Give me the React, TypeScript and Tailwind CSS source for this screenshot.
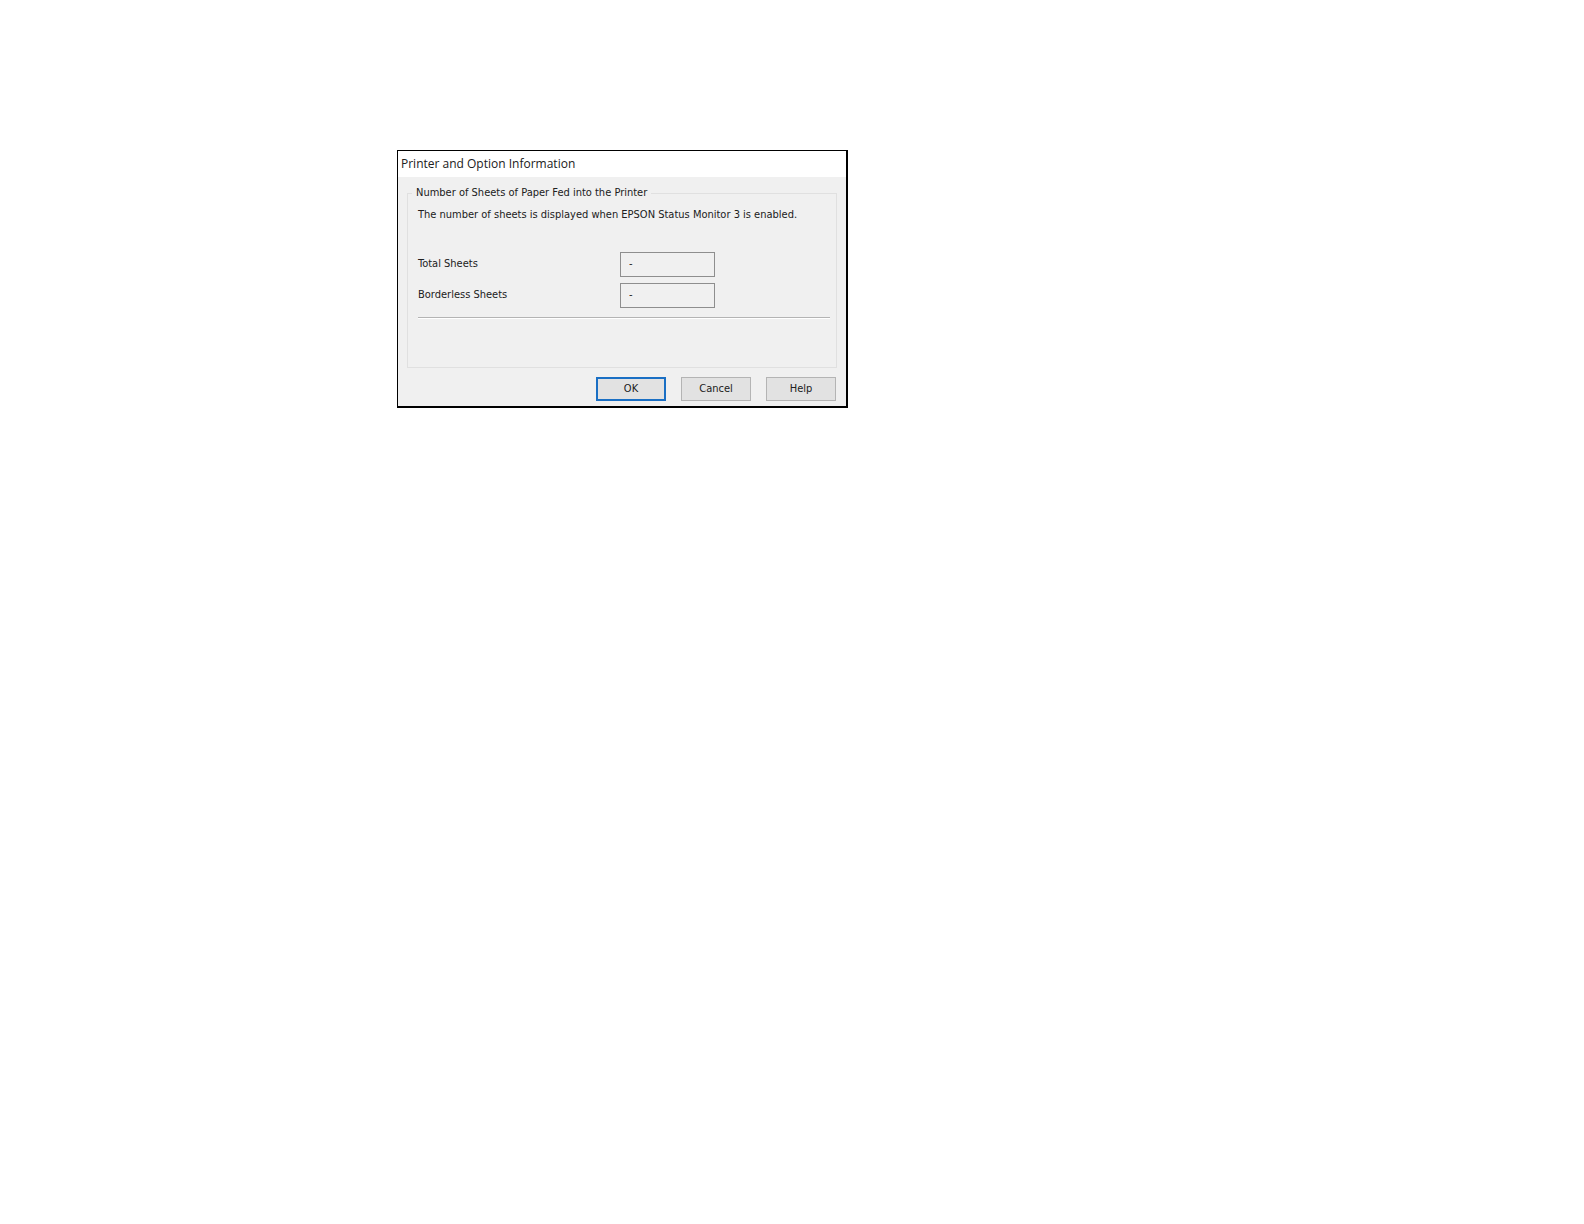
import { useId } from "react";

const sheetCounts = [
  { label: "Total Sheets", value: "-" },
  { label: "Borderless Sheets", value: "-" },
];

function SheetCount({ label, value }: { label: string; value: string }) {
  const id = useId();

  return (
    <div className="flex items-center">
      <label htmlFor={id} className="w-[202px] pb-[2px]">
        {label}
      </label>
      <input
        id={id}
        type="text"
        readOnly
        value={value}
        className="w-[95px] h-[25px] px-2 pb-[3px] bg-[#f0f0f0] border border-[#8e8e8e] outline-none"
      />
    </div>
  );
}

export default function App() {
  return (
    <main className="min-h-screen bg-white px-[397px] py-[150px]">
      <section
        role="dialog"
        aria-labelledby="dialog-title"
        className="w-full max-w-[451px] border-t border-l border-r-2 border-b-2 border-black bg-[#f0f0f0] font-['DejaVu_Sans_Condensed',sans-serif] text-[11px] leading-4 text-[#202020]"
      >
        <h1 id="dialog-title" className="bg-white px-[3px] py-[5px] font-['Open_Sans',sans-serif] text-xs leading-4">
          Printer and Option Information
        </h1>

        <fieldset className="mx-[9px] mt-2 border border-[#e0e0e0] px-1 pb-12">
          <legend className="px-1">Number of Sheets of Paper Fed into the Printer</legend>
          <div className="pl-[6px] pr-[2px] pt-[6px]">
            <p>The number of sheets is displayed when EPSON Status Monitor 3 is enabled.</p>
            <div className="flex flex-col gap-[6px] mt-[29px]">
              {sheetCounts.map((row) => (
                <SheetCount key={row.label} label={row.label} value={row.value} />
              ))}
            </div>
            <hr className="mt-[9px] border-t border-t-[#b4b4b4] border-b border-b-white" />
          </div>
        </fieldset>

        <div className="flex justify-end gap-[15px] px-[10px] pt-[9px] pb-[5px]">
          <button type="button" className="w-[70px] h-6 border-2 border-[#1a6fc4] bg-[#e2e2e2]">
            OK
          </button>
          <button type="button" className="w-[70px] h-6 border border-[#b4b4b4] bg-[#e2e2e2]">
            Cancel
          </button>
          <button type="button" className="w-[70px] h-6 border border-[#b4b4b4] bg-[#e2e2e2]">
            Help
          </button>
        </div>
      </section>
    </main>
  );
}
